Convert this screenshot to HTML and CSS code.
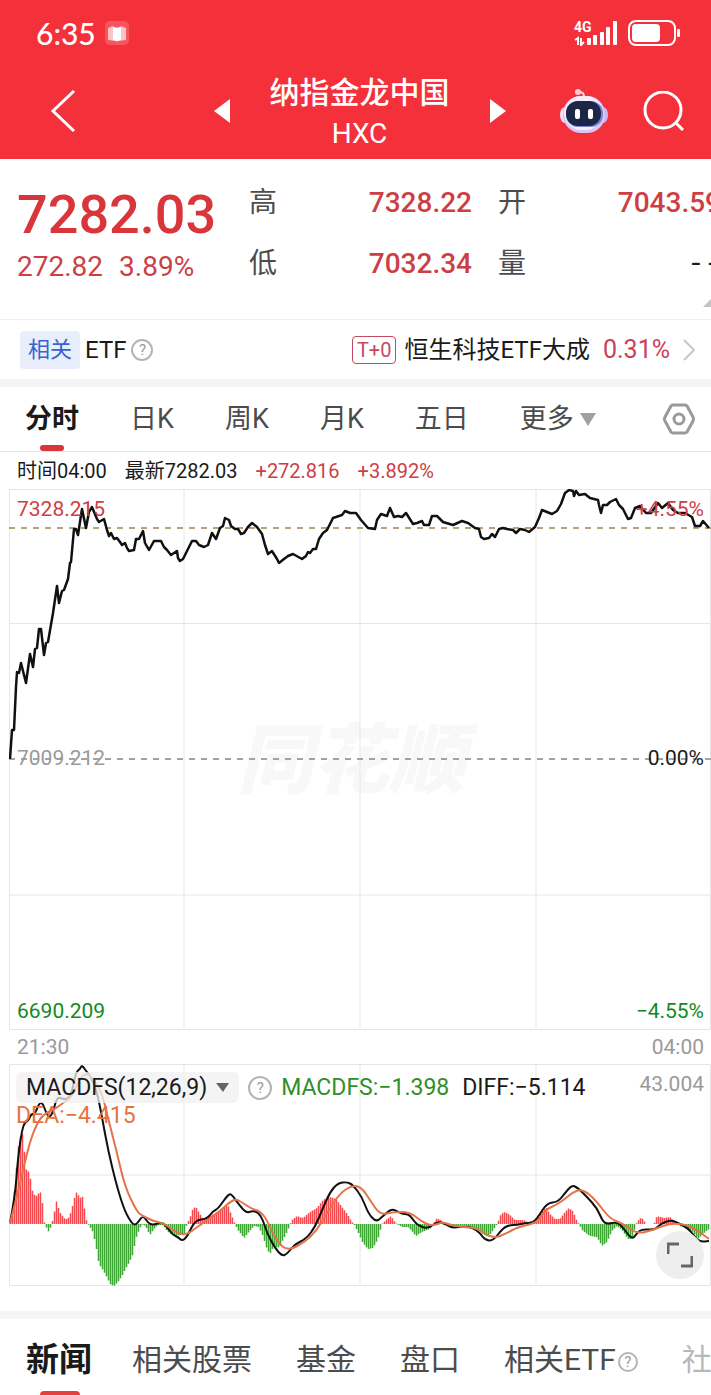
FILE: index.html
```html
<!DOCTYPE html>
<html lang="zh-CN">
<head>
    <meta charset="UTF-8">
    <meta name="viewport" content="width=device-width, initial-scale=1.0">
    <title>纳指金龙中国 HXC</title>
    <link rel="stylesheet" href="styles.css">
</head>
<body>
    <header class="header">
        <div class="status-bar">
            <span class="clock">6:35</span>
            <svg class="status-app" viewBox="0 0 24 24">
                <rect width="24" height="24" rx="5" fill="#fff" opacity=".18"/>
                <path d="M3 7l3-1 1-1 5 2 5-2 1 1 3 1v12l-8 1-1 1-1-1-8-1z" fill="#fff" opacity=".65"/>
                <path d="M8 6l4 1 4-1v13l-4 1-4-1z" fill="#fff"/>
            </svg>
            <div class="network">
                <span class="network-type">4G</span>
                <svg viewBox="0 0 44 26">
                    <g fill="none" stroke="#fff" stroke-width="2">
                        <path d="M1 20l3-2v7M7 18v7l3-3"/>
                    </g>
                    <g fill="#fff">
                        <rect x="13" y="18" width="4" height="7" rx="1"/>
                        <rect x="19" y="15" width="4" height="10" rx="1"/>
                        <rect x="26" y="12" width="4" height="13" rx="1"/>
                        <rect x="32" y="7" width="4" height="18" rx="1"/>
                        <rect x="39" y="1" width="4" height="24" rx="1"/>
                    </g>
                </svg>
            </div>
            <svg class="battery" viewBox="0 0 52 26">
                <rect x="1" y="1" width="46" height="24" rx="7" fill="none" stroke="#fff" stroke-width="2"/>
                <rect x="4" y="4" width="28" height="18" rx="4" fill="#fff"/>
                <rect x="49" y="9" width="3" height="8" rx="1" fill="#fff"/>
            </svg>
        </div>
        <nav class="nav">
            <button class="back" aria-label="返回">
                <svg width="26" height="42" viewBox="0 0 26 42"><path d="M24 1L3 21l21 20" fill="none" stroke="#fff" stroke-width="3"/></svg>
            </button>
            <div class="switcher">
                <button aria-label="上一个"><svg width="16" height="24" viewBox="0 0 16 24"><path d="M16 0v24L0 12z" fill="#fff"/></svg></button>
                <div class="name">
                    <h1>纳指金龙中国</h1>
                    <p>HXC</p>
                </div>
                <button aria-label="下一个"><svg width="16" height="24" viewBox="0 0 16 24"><path d="M0 0v24l16-12z" fill="#fff"/></svg></button>
            </div>
            <div class="tools">
                <button aria-label="助手">
                    <svg width="48" height="44" viewBox="0 0 48 44">
                        <path d="M24 8c0-5-3-5-6-5" fill="none" stroke="#ffd5dc" stroke-width="2"/>
                        <circle cx="18" cy="3" r="3" fill="#ffc9d0"/>
                        <ellipse cx="5" cy="26" rx="5" ry="8" fill="#f4dcf0"/>
                        <ellipse cx="43" cy="26" rx="5" ry="8" fill="#cfb4f2"/>
                        <rect x="3" y="7" width="42" height="37" rx="18" fill="#d7c6f7"/>
                        <rect x="4" y="7" width="39" height="34" rx="17" fill="#f8ecfa"/>
                        <rect x="6" y="12" width="37" height="26" rx="12" fill="#7a86ce"/>
                        <rect x="6" y="12" width="35" height="25" rx="12" fill="#1c2748"/>
                        <rect x="15" y="20" width="5" height="10" rx="2" fill="#fff"/>
                        <rect x="28" y="20" width="5" height="10" rx="2" fill="#fff"/>
                    </svg>
                </button>
                <button aria-label="搜索">
                    <svg width="42" height="40" viewBox="0 0 42 40"><g fill="none" stroke="#fff" stroke-width="3"><circle cx="20" cy="19" r="18"/><path d="M32 31l8 8"/></g></svg>
                </button>
            </div>
        </nav>
    </header>

    <section class="quote">
        <div class="price">
            <strong>7282.03</strong>
            <p><span>272.82</span><span>3.89%</span></p>
        </div>
        <dl class="stats">
            <div><dt>高</dt><dd>7328.22</dd></div>
            <div><dt>开</dt><dd>7043.59</dd></div>
            <div><dt>低</dt><dd>7032.34</dd></div>
            <div><dt>量</dt><dd class="empty">--</dd></div>
        </dl>
        <svg class="corner" width="18" height="9" viewBox="0 0 18 9"><path d="M0 9L9 0l9 9z" fill="#c4c4c4"/></svg>
    </section>

    <section class="related">
        <span class="tag">相关</span>
        <span>ETF</span>
        <button class="help" aria-label="ETF说明">?</button>
        <a class="fund" href="#">
            <span class="t0">T+0</span>
            <span>恒生科技ETF大成</span>
            <span class="fund-rate">0.31%</span>
            <svg width="12" height="22" viewBox="0 0 12 22"><path d="M1 1l10 10L1 21" fill="none" stroke="#c8c8c8" stroke-width="2"/></svg>
        </a>
    </section>

    <nav class="periods">
        <button class="active">分时</button>
        <button>日K</button>
        <button>周K</button>
        <button>月K</button>
        <button>五日</button>
        <button class="more">更多<svg width="16" height="14" viewBox="0 0 16 14"><path d="M0 1h16L8 14z" fill="#a0a0a0"/></svg></button>
        <button class="settings" aria-label="设置">
            <svg width="32" height="32" viewBox="0 0 32 32"><g fill="none" stroke="#9a9a9a" stroke-width="3"><path d="M10 2h12q1 0 2 1l6 11q1 2 0 4l-6 11q-1 1-2 1H10q-1 0-2-1L2 18q-1-2 0-4L8 3q1-1 2-1z"/><circle cx="16" cy="16" r="5"/></g></svg>
        </button>
    </nav>

    <div class="summary">
        <span>时间04:00</span>
        <span>最新7282.03</span>
        <span class="up">+272.816</span>
        <span class="up">+3.892%</span>
    </div>

    <section class="chart price-chart">
        <span class="watermark">同花顺</span>
        <svg viewBox="9 489 702 541" preserveAspectRatio="none">
            <path class="grid" d="M9.500 489.500H710.500V1029.500H9.500zM9 623.500H711M9 895H711M184 489V1030M360 489V1030M536 489V1030"/>
            <path class="last" d="M9 528H711"/>
            <path class="base" d="M9 759H711"/>
            <polyline id="price-line" class="line price-line"/>
        </svg>
        <span class="label top-left up">7328.215</span>
        <span class="label top-right up">+4.55%</span>
        <span class="label mid-left">7009.212</span>
        <span class="label mid-right">0.00%</span>
        <span class="label bottom-left down">6690.209</span>
        <span class="label bottom-right down">−4.55%</span>
    </section>

    <div class="times"><span>21:30</span><span>04:00</span></div>

    <section class="chart macd-chart">
        <svg viewBox="9 1064 702 222" preserveAspectRatio="none">
            <path class="grid" d="M9.500 1064.500H710.500V1285.500H9.500zM9 1175H711M184 1064V1286M360 1064V1286M536 1064V1286"/>
            <path id="bars-up" class="bars" stroke="#f5494f"/>
            <path id="bars-down" class="bars" stroke="#3fa535"/>
            <path id="diff-line" class="line"/>
            <path id="dea-line" class="line dea-line"/>
        </svg>
        <div class="macd-legend">
            <button class="indicator">MACDFS(12,26,9)<svg width="13" height="9" viewBox="0 0 13 9"><path d="M0 0h13L7 9z" fill="#666"/></svg></button>
            <button class="help big" aria-label="指标说明">?</button>
            <span class="macd">MACDFS:−1.398</span>
            <span>DIFF:−5.114</span>
            <span class="dea">DEA:−4.415</span>
        </div>
        <span class="label scale">43.004</span>
        <button class="expand" aria-label="全屏">
            <svg width="26" height="26" viewBox="0 0 26 26"><path d="M1 12V2h11M25 14v10H14" fill="none" stroke="#666" stroke-width="3"/></svg>
        </button>
    </section>

    <nav class="news-tabs">
        <a class="active" href="#">新闻</a>
        <a href="#">相关股票</a>
        <a href="#">基金</a>
        <a href="#">盘口</a>
        <a href="#">相关ETF<span class="help">?</span></a>
        <a class="faded" href="#">社</a>
    </nav>

    <script src="script.js"></script>
</body>
</html>
```
FILE: styles.css
```css
:root {
    --red: #f4303a;
    --up: #cc3f45;
    --down: #128a1c;
    --text: #1a1a1a;
    --muted: #9a9a9a;
    --line: #e6e6e6;
    --band: #f5f5f5;
}

* {
    margin: 0;
    padding: 0;
    box-sizing: border-box;
}

body {
    font-family: Roboto, "Noto Sans CJK SC", sans-serif;
    color: var(--text);
    background: #fff;
    overflow-x: hidden;
}

button {
    border: none;
    background: none;
    font: inherit;
    color: inherit;
    cursor: pointer;
}

a {
    color: inherit;
    text-decoration: none;
}

svg {
    display: block;
}

/* header */
.header {
    height: 159px;
    color: #fff;
    background: var(--red);
}

.status-bar {
    display: flex;
    align-items: center;
    height: 66px;
    padding: 0 31px 0 36px;
}

.clock {
    font-family: Lato, sans-serif;
    font-size: 30px;
    line-height: 36px;
    font-weight: 500;
}

.status-app {
    width: 24px;
    height: 24px;
    margin-left: 9px;
}

.network {
    position: relative;
    width: 44px;
    margin-left: auto;
    margin-right: 10px;
}

.network-type {
    position: absolute;
    top: 0;
    left: 0;
    font-size: 14px;
    line-height: 14px;
    font-weight: 700;
}

.battery {
    width: 52px;
    height: 26px;
}

.nav {
    display: grid;
    grid-template-columns: 1fr auto 1fr;
    align-items: center;
    height: 90px;
    padding: 0 26px 0 34px;
}

.back {
    justify-self: start;
    padding-left: 16px;
}

.switcher {
    display: flex;
    align-items: center;
    gap: 40px;
}

.name {
    padding-top: 4px;
    text-align: center;
}

.name h1 {
    font-size: 30px;
    line-height: 42px;
    font-weight: 500;
}

.name p {
    font-size: 28px;
    line-height: 40px;
}

.tools {
    display: flex;
    align-items: center;
    justify-content: flex-end;
    gap: 35px;
}

/* quote */
.quote {
    display: flex;
    position: relative;
    height: 161px;
    padding: 20px 0 0 17px;
    border-bottom: 1px solid #efefef;
    overflow: hidden;
}

.price {
    flex: none;
    width: 232px;
    color: #d9363b;
}

.price strong {
    display: block;
    font-size: 54px;
    line-height: 72px;
    font-weight: 500;
}

.price p {
    display: flex;
    gap: 16px;
    font-size: 28px;
    line-height: 32px;
    color: var(--up);
}

.stats {
    flex: 1;
    display: grid;
    grid-template-columns: 1fr 1fr;
    align-content: start;
    column-gap: 26px;
    row-gap: 13px;
    margin-right: -10px;
    font-size: 28px;
    line-height: 48px;
}

.stats div {
    display: flex;
    justify-content: space-between;
}

.stats dt {
    color: #4c4c4c;
}

.stats dd {
    font-weight: 500;
    color: var(--up);
}

.stats .empty {
    font-family: "Liberation Mono", monospace;
    color: var(--text);
}

.corner {
    position: absolute;
    right: -10px;
    bottom: 12px;
}

/* related fund */
.related {
    display: flex;
    align-items: center;
    height: 67px;
    padding: 0 16px 0 20px;
    border-bottom: 8px solid var(--band);
    font-size: 24px;
    line-height: 38px;
}

.tag {
    margin-right: 5px;
    padding: 0 8px;
    border-radius: 4px;
    font-size: 22px;
    color: #3a62cf;
    background: #e8eefc;
}

.help {
    display: inline-block;
    width: 22px;
    height: 22px;
    margin-left: 5px;
    border: 2px solid #b4b4b4;
    border-radius: 50%;
    font-size: 15px;
    line-height: 18px;
    text-align: center;
    color: var(--muted);
}

.fund {
    display: flex;
    align-items: center;
    margin-left: auto;
}

.t0 {
    margin-right: 8px;
    padding: 0 4px;
    border: 1px solid #c44a60;
    border-radius: 4px;
    font-size: 20px;
    line-height: 26px;
    color: #c44a60;
}

.fund-rate {
    margin: 0 13px;
    font-size: 25px;
    color: #cc3f5a;
}

/* period tabs */
.periods {
    display: flex;
    align-items: center;
    gap: 51px;
    height: 65px;
    padding: 0 16px 0 25px;
    border-bottom: 1px solid var(--line);
    font-size: 27px;
    line-height: 64px;
    color: #4c4c4c;
}

.periods .active {
    position: relative;
    font-weight: 700;
    color: var(--text);
}

.periods .active::after {
    content: "";
    position: absolute;
    left: 15px;
    bottom: 0;
    width: 24px;
    height: 6px;
    border-radius: 3px;
    background: #d9363b;
}

.more {
    display: flex;
    align-items: center;
    gap: 6px;
}

.settings {
    margin-left: auto;
}

.summary {
    display: flex;
    gap: 18px;
    height: 37px;
    padding-left: 17px;
    font-size: 20px;
    line-height: 38px;
}

.up {
    color: var(--up);
}

.down {
    color: var(--down);
}

/* charts */
.chart {
    position: relative;
    margin-left: 9px;
}

.chart > svg {
    width: 100%;
}

.price-chart > svg {
    position: relative;
    height: 541px;
}

.macd-chart > svg {
    height: 222px;
}

.grid {
    fill: none;
    stroke: var(--line);
    stroke-width: 1;
}

.last,
.base {
    fill: none;
    stroke: #b5a37e;
    stroke-width: 2;
    stroke-dasharray: 6 6;
}

.base {
    stroke: #a3a3a3;
}

.line {
    fill: none;
    stroke: #111;
    stroke-width: 2;
    stroke-linejoin: round;
}

.price-line {
    stroke-width: 2.5;
}

.dea-line {
    stroke: #e2744a;
}

.bars {
    fill: none;
    stroke-width: 1.5;
}

.watermark {
    position: absolute;
    top: 222px;
    left: 0;
    right: 18px;
    font-size: 76px;
    line-height: 100px;
    font-weight: 900;
    font-style: italic;
    text-align: center;
    color: #f8f8f8;
}

.label {
    position: absolute;
    font-size: 21px;
    line-height: 28px;
}

.top-left,
.mid-left,
.bottom-left {
    left: 8px;
}

.top-right,
.mid-right,
.bottom-right,
.scale {
    right: 7px;
}

.top-left,
.top-right {
    top: 6px;
}

.mid-left,
.mid-right {
    top: 255px;
}

.mid-left,
.scale {
    color: var(--muted);
}

.bottom-left,
.bottom-right {
    bottom: 5px;
}

.times {
    display: flex;
    justify-content: space-between;
    padding: 0 7px 0 17px;
    font-size: 21px;
    line-height: 34px;
    color: var(--muted);
}

.macd-legend {
    display: flex;
    flex-wrap: wrap;
    align-items: center;
    column-gap: 9px;
    position: absolute;
    top: 8px;
    left: 7px;
    right: 100px;
    font-size: 23px;
    line-height: 26px;
}

.indicator {
    display: flex;
    align-items: center;
    gap: 9px;
    padding: 0 10px;
    border-radius: 6px;
    line-height: 31px;
    background: rgba(240, 240, 240, 0.75);
}

.big {
    width: 24px;
    height: 24px;
    margin-left: 0;
    line-height: 20px;
}

.macd {
    color: #2f8f2b;
}

.macd + span {
    margin-left: 4px;
}

.dea {
    color: #e8733f;
}

.scale {
    top: 6px;
}

.expand {
    position: absolute;
    right: 7px;
    bottom: 7px;
    display: grid;
    place-items: center;
    width: 48px;
    height: 48px;
    border-radius: 50%;
    background: rgba(236, 236, 236, 0.9);
}

/* news tabs */
.news-tabs {
    display: flex;
    gap: 44px;
    height: 84px;
    margin-top: 25px;
    padding-left: 26px;
    border-top: 8px solid var(--band);
    font-size: 30px;
    line-height: 82px;
    white-space: nowrap;
    color: #4c4c4c;
    overflow: hidden;
}

.news-tabs .active {
    position: relative;
    margin-right: -4px;
    font-size: 33px;
    font-weight: 700;
    color: var(--text);
}

.news-tabs .active::after {
    content: "";
    position: absolute;
    left: 14px;
    top: 72px;
    width: 40px;
    height: 8px;
    border-radius: 4px;
    background: #e5413c;
}

.news-tabs .help {
    width: 20px;
    height: 20px;
    margin-left: 2px;
    line-height: 16px;
    vertical-align: 3px;
}

.news-tabs .faded {
    color: #b8b8b8;
}
```
FILE: script.js
```js
// x,y pairs in the coordinates of each chart's viewBox
const price = `10,759 12,730 14,730 16,687 17,672 19,673 21,663 26,683 30,654 33,667 35,649 37,648 39,629 41,629 44,655 46,643 48,642
53,613 57,586 59,603 62,591 64,590 68,579 70,563 71,562 74,529 76,529 78,535 82,509 86,528 89,512 92,507 97,519 99,522 104,519
107,530 109,536 111,533 114,539 117,538 120,542 122,545 125,543 127,548 129,551 134,550 136,539 139,539 143,531 145,543 149,550
154,541 161,541 164,547 167,550 171,555 174,553 177,551 178,558 180,561 183,559 192,541 196,541 199,545 204,547 208,545 212,533
216,539 220,528 223,526 225,518 229,520 231,526 235,529 238,529 241,534 244,533 248,527 252,523 257,527 262,534 265,545 268,554
272,551 277,559 279,563 284,559 288,556 293,554 302,559 306,556 308,552 310,553 313,549 316,549 319,539 323,533 327,530 333,518
342,515 345,511 350,513 356,513 361,520 368,528 375,529 377,520 381,514 387,516 390,508 394,517 398,516 402,517 406,513 413,524
417,523 422,521 424,525 429,525 432,516 437,516 443,522 453,525 462,521 468,523 475,528 479,529 481,537 484,539 489,538 492,534
495,537 499,529 503,528 507,529 513,530 516,533 520,529 525,530 529,532 535,527 539,518 542,510 547,512 552,514 557,511 561,504
565,493 569,490 573,491 574,496 576,491 579,495 585,494 590,498 598,500 599,505 601,513 603,505 607,505 610,502 616,499 619,505
623,509 628,519 631,518 635,508 640,506 646,513 651,513 658,503 662,508 668,503 673,510 678,513 685,513 692,517 695,526 700,526
703,521 709,528`;

const diff = `10,1223 15,1197 18,1157 22,1130 25,1122 28,1121 32,1113 34,1116 41,1099 47,1115 50,1117 53,1112 57,1097 63,1099 68,1099
72,1092 76,1072 80,1069 82,1065 86,1071 91,1077 97,1092 102,1117 108,1150 117,1187 125,1212 133,1225 137,1224 143,1215 148,1223
153,1225 162,1222 167,1227 173,1235 178,1237 182,1241 187,1237 195,1220 207,1219 213,1211 218,1209 229,1193 233,1196 237,1202
246,1213 252,1211 258,1212 263,1220 267,1233 275,1248 282,1256 287,1254 295,1244 306,1239 315,1227 323,1208 330,1192 338,1183
347,1182 353,1185 362,1197 368,1213 376,1222 382,1217 391,1209 397,1211 402,1214 408,1214 412,1218 417,1225 428,1229 438,1221
447,1225 453,1228 465,1226 473,1228 480,1233 485,1240 493,1241 503,1228 510,1225 517,1225 525,1223 533,1223 538,1217 547,1203
558,1202 565,1193 572,1185 578,1188 587,1197 597,1208 603,1222 608,1224 616,1222 622,1226 632,1240 637,1233 642,1229 655,1230
660,1224 671,1220 678,1223 688,1228 695,1237 700,1242 709,1241`;

const dea = `10,1223 17,1197 26,1157 33,1132 42,1115 55,1109 63,1103 72,1097 80,1078 87,1073 93,1079 102,1093 108,1118 117,1153
125,1187 137,1212 143,1216 153,1221 163,1223 173,1230 185,1236 197,1227 208,1220 220,1211 230,1202 236,1199 243,1203 252,1209
260,1211 267,1220 277,1242 288,1251 305,1242 317,1230 327,1213 340,1193 353,1185 362,1188 370,1200 380,1215 393,1212 410,1212
422,1222 432,1226 443,1222 450,1225 463,1227 477,1228 493,1239 507,1233 518,1227 537,1223 545,1210 560,1203 577,1189 587,1192
598,1203 610,1219 622,1223 637,1234 653,1230 670,1223 687,1225 697,1230 709,1239`;

// x,height pairs, negative heights hang below zero
const histogram = `10,0 13,15 16,50 18,75 21,90 23,90 24,78 26,55 29,52 31,43 33,30 37,28 40,33 42,27 44,3 45,0 46,-2 48,-8 51,-3 52,1
53,5 55,15 57,25 59,13 62,9 65,5 68,5 71,12 74,24 76,32 78,30 80,25 82,30 84,19 86,5 88,0 90,-3 93,-8 96,-22 99,-40 103,-46
107,-53 110,-60 114,-62 118,-58 122,-52 126,-44 130,-37 133,-30 136,-14 140,-4 143,0 146,-3 150,-11 154,-5 158,-1 163,-1 168,-8
174,-12 180,-11 184,-11 187,0 190,6 193,16 196,17 200,10 204,4 208,8 214,10 220,14 228,19 231,10 234,3 235,0 238,-6 244,-14
249,-8 254,-2 259,-3 263,-12 267,-25 270,-30 274,-22 278,-24 283,-16 288,-6 290,0 293,5 297,8 303,6 310,12 317,16 323,24 330,27
336,25 342,17 348,9 352,2 354,0 358,-8 363,-19 368,-25 373,-24 378,-15 382,0 386,4 391,8 395,2 397,0 402,-3 408,-3 412,-7
416,-12 422,-8 430,-5 433,0 437,6 442,3 446,0 455,-2 465,-1 475,-4 483,-10 488,-13 492,-8 496,-2 498,2 501,10 505,12 510,9
515,4 523,4 528,2 534,3 540,10 546,17 550,10 555,5 560,5 565,12 569,16 573,13 577,3 579,0 583,-7 590,-12 597,-13 602,-22
607,-18 612,-7 617,-2 622,-6 628,-15 632,-15 636,0 640,6 643,5 646,0 654,0 657,8 664,6 670,7 675,2 680,-2 686,-4 692,-7
698,-15 703,-10 709,-5`;

function parse(text) {
    return text.split(/\s+/).map(pair => pair.split(',').map(Number));
}

// smooth curve through the middle of each segment
function curve(points) {
    let d = `M${points[0]}`;
    for (let i = 1; i < points.length - 1; i++) {
        const [x, y] = points[i];
        const [nx, ny] = points[i + 1];
        d += `Q${x},${y} ${(x + nx) / 2},${(y + ny) / 2}`;
    }
    return d + `L${points[points.length - 1]}`;
}

function drawBars(points) {
    const zero = 1224;
    const step = 2;
    let up = '';
    let down = '';
    let i = 0;
    for (let x = 10.5; x < 709; x += step) {
        while (points[i + 1][0] < x) i++;
        const [x1, h1] = points[i];
        const [x2, h2] = points[i + 1];
        const h = h1 + (h2 - h1) * (x - x1) / (x2 - x1);
        const bar = `M${x} ${zero}v${-h}`;
        if (h > 0) up += bar;
        else down += bar;
    }
    document.getElementById('bars-up').setAttribute('d', up);
    document.getElementById('bars-down').setAttribute('d', down);
}

document.getElementById('price-line').setAttribute('points', price);
document.getElementById('diff-line').setAttribute('d', curve(parse(diff)));
document.getElementById('dea-line').setAttribute('d', curve(parse(dea)));
drawBars(parse(histogram));
```
